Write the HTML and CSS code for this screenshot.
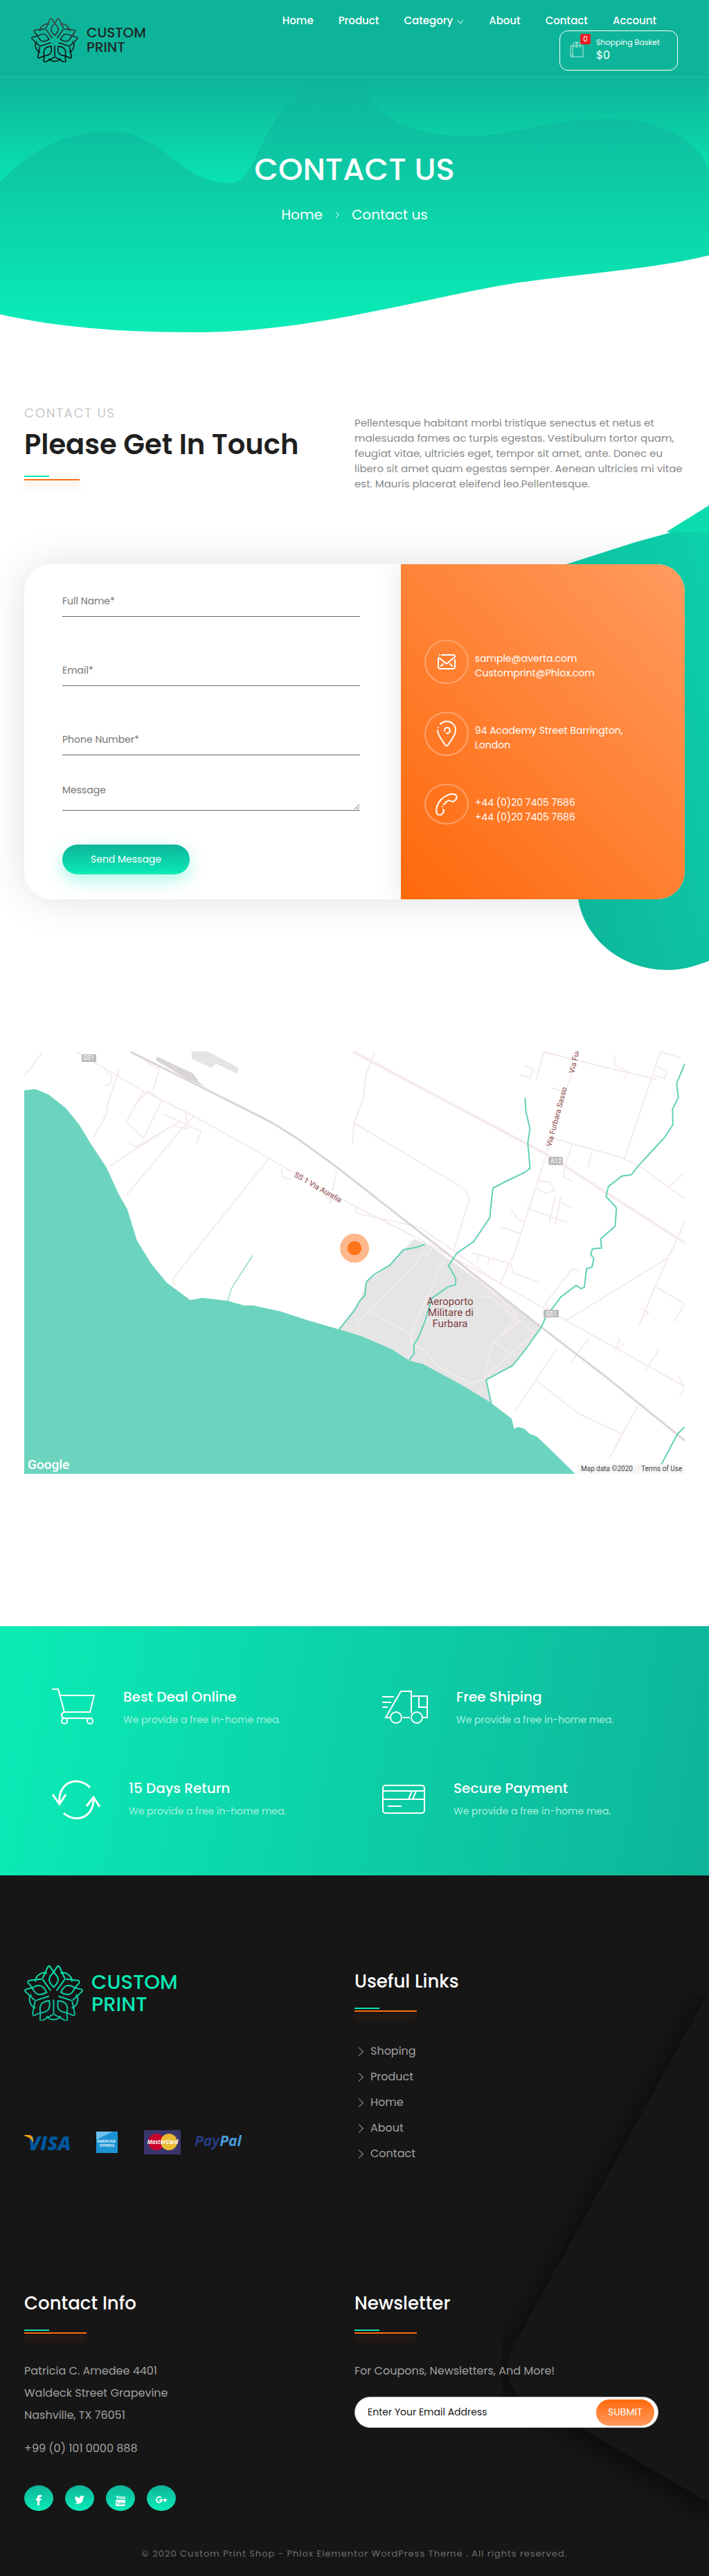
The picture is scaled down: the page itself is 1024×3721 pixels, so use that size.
FILE: index.html
```html
<!DOCTYPE html>
<html lang="en">

<head>
    <meta charset="UTF-8">
    <meta name="viewport" content="width=device-width, initial-scale=1.0">
    <title>Contact us - Custom Print</title>
    <link rel="stylesheet" href="styles.css">
</head>

<body>

    <!-- Shared logo shapes -->
    <svg class="defs" width="0" height="0" aria-hidden="true">
        <defs>
            <g id="petal" fill="none" stroke="#fff" stroke-width="6" stroke-linecap="round" stroke-linejoin="round">
                <path d="M0 -33C-27 -58 -25 -76 0 -98L14 -121Q20 -130 26 -121L48 -73" />
                <path d="M0 -33C27 -58 25 -76 0 -98L-14 -121Q-20 -130 -26 -121L-48 -73" />
                <path transform="rotate(36)" d="M0 -24V-82M-30 -95Q-20 -109 0 -109T30 -95" />
            </g>
            <g id="flower">
                <use href="#petal" />
                <use href="#petal" transform="rotate(72)" />
                <use href="#petal" transform="rotate(144)" />
                <use href="#petal" transform="rotate(216)" />
                <use href="#petal" transform="rotate(288)" />
            </g>
            <mask id="flowerMask" maskUnits="userSpaceOnUse" x="-130" y="-130" width="260" height="260">
                <use href="#flower" />
            </mask>
            <linearGradient id="logoDark" x1="0" y1="0" x2="0" y2="1">
                <stop offset="0" stop-color="#3f4b49" />
                <stop offset="1" stop-color="#000" />
            </linearGradient>
            <linearGradient id="logoGreen" x1="0" y1="0" x2="0" y2="1">
                <stop offset="0" stop-color="#0aecb6" />
                <stop offset="1" stop-color="#0eb499" />
            </linearGradient>
        </defs>
    </svg>

    <header class="header">
        <a class="logo" href="#">
            <svg class="logo-mark" viewBox="-129 -128 258 242" aria-hidden="true">
                <rect x="-130" y="-130" width="260" height="245" fill="url(#logoDark)" mask="url(#flowerMask)" />
            </svg>
            <span>CUSTOM<br>PRINT</span>
        </a>
        <div class="header-right">
            <nav class="nav">
                <a href="#">Home</a>
                <a href="#">Product</a>
                <a href="#">Category
                    <svg width="10" height="7" viewBox="0 0 10 7" aria-hidden="true"><path d="M1 1L5 6L9 1" /></svg>
                </a>
                <a href="#">About</a>
                <a href="#">Contact</a>
                <a href="#">Account</a>
            </nav>
            <a class="basket" href="#">
                <span class="basket-icon">
                    <svg width="20" height="23" viewBox="0 0 20 23" aria-hidden="true">
                        <path d="M1 6H19V22H1ZM4 6V22M1 19H4L5 22M5 9V4Q5 1 8 1T11 4V9M9 9V4Q9 1 12 1T15 4V9" />
                    </svg>
                    <span class="badge">0</span>
                </span>
                <span class="basket-text">Shopping Basket<b>$0</b></span>
            </a>
        </div>
    </header>

    <section class="hero">
        <svg class="hero-bg" viewBox="0 0 1024 367" preserveAspectRatio="none" aria-hidden="true">
            <defs>
                <linearGradient id="heroBack" gradientUnits="userSpaceOnUse" x1="0" y1="0" x2="0" y2="155">
                    <stop offset="0" stop-color="#0eb499" />
                    <stop offset="1" stop-color="#09e4b2" />
                </linearGradient>
                <linearGradient id="heroFront" gradientUnits="userSpaceOnUse" x1="0" y1="0" x2="0" y2="355">
                    <stop offset="0" stop-color="#0eb499" />
                    <stop offset="1" stop-color="#0aebb6" />
                </linearGradient>
            </defs>
            <rect width="1024" height="180" fill="url(#heroBack)" />
            <path fill="url(#heroFront)" d="M0 150C50 100 100 77 157 77C215 77 245 118 280 138C300 148 315 152 333 152C352 152 362 130 378 97C398 55 420 25 468 0H525C530 45 575 84 673 84C750 84 790 59 878 59C960 59 1018 95 1024 140V256C950 275 860 280 745 296C600 320 450 367 280 367C160 367 70 357 0 341Z" />
        </svg>
        <h1>CONTACT US</h1>
        <p class="breadcrumb">
            <a href="#">Home</a>
            <svg width="6" height="11" viewBox="0 0 6 11" aria-hidden="true"><path d="M1 1L5 5L1 10" /></svg>
            <span>Contact us</span>
        </p>
    </section>

    <main>
        <section class="intro">
            <div>
                <p class="subtitle">CONTACT US</p>
                <h2>Please Get In Touch</h2>
                <div class="bars"></div>
            </div>
            <p class="intro-text">Pellentesque habitant morbi tristique senectus et netus et malesuada fames ac turpis egestas. Vestibulum tortor quam, feugiat vitae, ultricies eget, tempor sit amet, ante. Donec eu libero sit amet quam egestas semper. Aenean ultricies mi vitae est. Mauris placerat eleifend leo.Pellentesque.</p>
        </section>

        <section class="contact">
            <svg class="blob" width="209" height="672" viewBox="0 0 209 672" aria-hidden="true">
                <defs>
                    <linearGradient id="blobFill" x1="0" y1="1" x2="1" y2="0">
                        <stop offset="0" stop-color="#0eb499" />
                        <stop offset="1" stop-color="#0cd0aa" />
                    </linearGradient>
                </defs>
                <path fill="#0bdcae" d="M209 0L148 38L209 60Z" />
                <path fill="url(#blobFill)" d="M0 86L100 54Q135 44 155 39H209V658C185 667 170 671 148 671C80 671 24 622 19 560V86Z" />
            </svg>

            <div class="card">
                <form class="contact-form">
                    <input type="text" placeholder="Full Name*" aria-label="Full Name">
                    <input type="email" placeholder="Email*" aria-label="Email">
                    <input type="tel" placeholder="Phone Number*" aria-label="Phone Number">
                    <textarea placeholder="Message" aria-label="Message"></textarea>
                    <button type="submit">Send Message</button>
                </form>

                <div class="contact-info">
                    <div class="info-item">
                        <span class="circle">
                            <svg width="26" height="22" viewBox="0 0 26 22" aria-hidden="true">
                                <path d="M6 1H23Q25 1 25 4L14 13Q13 14 12 13L2 5Q1 5 1 7V18Q1 21 4 21H22Q25 21 25 18V8M5 17L8 14M21 17L18 14M3 1V1" />
                            </svg>
                        </span>
                        <p>sample@averta.com<br>Customprint@Phlox.com</p>
                    </div>
                    <div class="info-item">
                        <span class="circle">
                            <svg width="28" height="38" viewBox="0 0 28 38" aria-hidden="true">
                                <path d="M5 5Q9 1 14 1C22 1 27 7 27 14C27 21 20 29 16 35Q14 38 12 35C8 29 1 21 1 14M2 10V10M11 15A4 4 0 1 1 14 18" />
                            </svg>
                        </span>
                        <p>94 Academy Street Barrington,<br>London</p>
                    </div>
                    <div class="info-item">
                        <span class="circle circle-flat">
                            <svg width="32" height="32" viewBox="0 0 32 32" aria-hidden="true">
                                <path d="M12 16L16 12Q19 9 22 11Q25 13 27 11L30 8Q32 5 29 2C23 -1 14 3 8 9C2 16 0 23 2 29Q5 33 8 31L11 28Q13 26 11 23M10 19V19" />
                            </svg>
                        </span>
                        <p>+44 (0)20 7405 7686<br>+44 (0)20 7405 7686</p>
                    </div>
                </div>
            </div>
        </section>

        <section class="map">
            <svg class="map-lines" viewBox="54 47 1460 1494" preserveAspectRatio="none" aria-hidden="true">
                <!-- airport -->
                <path class="land" d="M915 710L956 738L1197 1020L1160 1105L1133 1158L1075 1208L1086 1290L905 1140L750 1030L795 930L810 862L862 803Z" />
                <path class="land" d="M424 47H460L528 105L524 125L478 90L468 105L424 72Z" />
                <!-- sea -->
                <path class="sea" d="M54 184L78 179L107 198L146 247L175 304L200 370L235 455L264 555L282 605L303 715L334 796L368 863L421 926L448 918L504 929L540 945L560 945L620 966L680 997L750 1030L800 1054L867 1100L905 1140L935 1152L985 1195L1030 1235L1086 1290L1131 1345L1137 1381L1146 1375L1160 1382L1171 1399L1188 1410L1230 1475L1272 1541H54Z" />
                <!-- roads -->
                <g class="road">
                    <path d="M168 47L310 180L420 268L530 365L650 475L780 590L860 655L956 735L1100 862L1250 997L1400 1130L1514 1232" />
                    <path d="M95 47L54 135M264 113L240 220L235 270L208 348M318 185L279 297L318 353L358 220L330 188L305 220M232 103L235 120L248 135L245 160L232 170M320 80L352 108L340 180" />
                    <path d="M362 267L445 330L435 370M410 260L415 320L382 310L300 385L286 370M430 275L400 325L280 555M400 290L243 452M593 428L390 835Q378 855 388 875M622 460L625 490L645 500" />
                    <path d="M829 47L809 130L804 210L783 300L780 370M783 300L1025 530Q1040 550 1036 580L1003 752M745 470L735 540M720 560L735 575L727 585" />
                    <path d="M785 600L790 620L850 640L930 670L1003 752L1100 862M1203 47L1346 107M1203 47L1186 145M1160 97L1180 110L1172 140L1150 130M1195 47L1450 145M1460 47L1440 145L1380 430M1360 60L1358 92L1390 120L1380 143" />
                    <path d="M1450 100L1475 115L1470 140L1448 132M1460 47L1505 70M1270 100L1250 190L1220 175M1220 350L1140 750L1105 870M1215 350L1370 420L1412 450L1514 568M1265 375L1250 450L1245 490L1268 507M1310 395L1300 455" />
                    <path d="M1190 505L1215 510L1226 540L1205 548L1185 530M1165 600L1255 653M1228 555L1215 655M1240 560L1228 658M1130 605L1145 640L1158 650M1108 668L1150 690M1240 580L1265 600" />
                    <path d="M1042 758L1130 798L1135 830L1190 862M1060 770L1055 792M1082 778L1078 805M1250 1000L1478 775L1514 650M1478 775L1448 878L1412 1020M1448 878L1514 938L1490 1005M1418 955L1434 970L1425 985" />
                    <path d="M1265 815L1205 940L1215 960M1265 815L1282 825M1510 480L1480 525M1370 1060L1362 1100L1380 1080M1458 1100L1425 1180M1232 1095L1140 1315M1303 1060L1260 1150M1185 1210L1280 1328L1376 1400L1410 1300M1376 1400L1348 1485M1500 1195L1514 1240L1502 1265" />
                    <path d="M956 740L948 765L935 758L915 808L818 965L788 1012M818 965L908 1048L912 1085L935 1098L972 1165L1042 1220L1072 1205L1085 1090L1140 990L1178 1038L1172 1060L1130 1115L1085 1180L1072 1205M980 790L908 1048M960 745L1070 870L1145 980M1095 1075L1125 1115M1150 1000L1100 1060M1065 915H1085L1140 990" />
                </g>
                <path class="highway" d="M780 47L1210 412L1514 724" />
                <path class="rail" d="M288 47L530 240L600 297L655 352L740 450L840 575L960 725L1197 1022L1340 1198L1514 1423" />
                <path class="rail-yard" d="M348 65L428 125L440 155L455 172L415 145L345 78Z" />
                <!-- rivers -->
                <g class="river">
                    <path d="M1161 210L1163 260L1172 320L1167 370L1172 460L1160 475L1120 505L1090 530L1085 600L1083 635L1047 720L1010 760L992 805L1008 850L1007 872L990 880L955 920L940 1000L925 1060L915 1085L916 1115L905 1138" />
                    <path d="M1514 90L1496 160L1500 210L1487 250L1488 305L1470 350L1435 410L1412 450L1396 483L1375 487L1345 525L1340 560L1363 600L1360 665L1328 710L1330 742L1310 745L1306 765L1313 778L1309 810L1297 815L1292 880L1285 886L1274 874L1240 915L1220 958L1207 985L1197 1022L1160 1105L1133 1158L1075 1208L1086 1290" />
                    <path d="M940 728Q925 740 892 748L862 803L828 835L810 862L807 910L795 930L785 960L750 1030M1514 1375L1498 1400L1462 1508L1455 1541" />
                    <path class="stream" d="M559 768L512 885L504 929" />
                </g>
            </svg>
            <svg class="map-labels" viewBox="0 0 954 610" role="img" aria-label="Map of the Furbara area">
                <rect class="shield" x="83" y="4" width="21" height="11" />
                <text class="shield-text" x="93" y="12">SS1</text>
                <rect class="shield" x="757" y="152" width="21" height="12" rx="3" />
                <text class="shield-text" x="768" y="161">A12</text>
                <rect class="shield" x="750" y="373" width="22" height="11" />
                <text class="shield-text" x="761" y="382">SS1</text>
                <text class="street" transform="translate(389 180) rotate(30)">SS 1 Via Aurelia</text>
                <text class="street" transform="translate(761 138) rotate(-75)">Via Furbara Sasso</text>
                <text class="street" transform="translate(794 32) rotate(-77)">Via Furbara</text>
                <g class="place">
                    <text x="615" y="366">Aeroporto</text>
                    <text x="616" y="382">Militare di</text>
                    <text x="615" y="398">Furbara</text>
                </g>
                <text class="google" x="5" y="603">Google</text>
                <rect x="799" y="596" width="155" height="14" fill="#f7f6f6" />
                <text class="terms" x="804" y="606">Map data ©2020</text>
                <text class="terms" x="891" y="606">Terms of Use</text>
            </svg>
            <span class="marker"></span>
        </section>
    </main>

    <section class="features">
        <div class="feature">
            <svg width="62" height="52" viewBox="0 0 62 52" aria-hidden="true">
                <path d="M0 1H9L18 34H55L61 10H12M18 34Q13 36 14 39Q14 42 18 43H58" />
                <circle cx="18" cy="47" r="4" /><circle cx="55" cy="47" r="4" />
            </svg>
            <div>
                <h3>Best Deal Online</h3>
                <p>We provide a free in-home mea.</p>
            </div>
        </div>
        <div class="feature">
            <svg width="66" height="52" viewBox="0 0 66 52" aria-hidden="true">
                <path d="M11 42H5L27 4H42V36M42 11H65V42H59M53 11V27H65M30 42H40M0 12H17M0 20H13M0 27H8" />
                <circle cx="20" cy="42" r="8" /><circle cx="50" cy="42" r="8" />
            </svg>
            <div>
                <h3>Free Shiping</h3>
                <p>We provide a free in-home mea.</p>
            </div>
        </div>
        <div class="feature">
            <svg class="thick" width="70" height="58" viewBox="0 0 70 58" aria-hidden="true">
                <path d="M55 11C37 -7 8 3 11 34M1 21L11 35L20 21M17 48C35 64 62 54 60 25M50 38L60 25L69 39" />
            </svg>
            <div>
                <h3>15 Days Return</h3>
                <p>We provide a free in-home mea.</p>
            </div>
        </div>
        <div class="feature">
            <svg width="62" height="54" viewBox="0 0 62 54" aria-hidden="true">
                <rect x="1" y="8" width="60" height="40" rx="4" />
                <path d="M1 16H61M1 28H61M8 38H28M43 16L38 28M49 16L44 28" />
            </svg>
            <div>
                <h3>Secure Payment</h3>
                <p>We provide a free in-home mea.</p>
            </div>
        </div>
    </section>

    <footer class="footer">
        <svg class="footer-bg" width="300" height="842" viewBox="0 0 300 842" aria-hidden="true">
            <path d="M320 -40L128 310L16 512Q-4 550 26 582L111 626L320 748Z" />
        </svg>

        <div class="footer-grid">
            <div>
                <a class="logo logo-footer" href="#">
                    <svg class="logo-mark" viewBox="-129 -128 258 242" aria-hidden="true">
                        <rect x="-130" y="-130" width="260" height="245" fill="url(#logoGreen)" mask="url(#flowerMask)" />
                    </svg>
                    <span>CUSTOM<br>PRINT</span>
                </a>
                <svg class="payments" width="314" height="36" viewBox="0 0 314 36" role="img" aria-label="Accepted payments">
                    <text class="visa" x="6" y="29">VISA</text>
                    <path fill="#f7a01b" d="M0 7H8Q13 8 13 18Q9 10 0 8Z" />
                    <rect x="104" y="2" width="31" height="31" fill="#1b93d3" />
                    <path fill="#6cc0ea" d="M104 2H128L104 14Z" />
                    <text class="amex" x="105" y="18">AMERICAN</text>
                    <text class="amex" x="109" y="24">EXPRESS</text>
                    <rect x="173" width="53" height="35" fill="#39366b" />
                    <circle cx="191" cy="17" r="12" fill="#c8032c" />
                    <circle cx="209" cy="17" r="12" fill="#e8b933" />
                    <text class="mastercard" x="200" y="20">MasterCard</text>
                    <text class="paypal" x="246" y="23">Pay<tspan>Pal</tspan></text>
                </svg>
            </div>

            <div>
                <h4>Useful Links</h4>
                <div class="bars bars-footer"></div>
                <ul class="links">
                    <li><a href="#">Shoping</a></li>
                    <li><a href="#">Product</a></li>
                    <li><a href="#">Home</a></li>
                    <li><a href="#">About</a></li>
                    <li><a href="#">Contact</a></li>
                </ul>
            </div>

            <div>
                <h4>Contact Info</h4>
                <div class="bars bars-footer"></div>
                <address>
                    <p>Patricia C. Amedee 4401<br>Waldeck Street Grapevine<br>Nashville, TX 76051</p>
                    <p>+99 (0) 101 0000 888</p>
                </address>
                <div class="social">
                    <a href="#" aria-label="Facebook">
                        <svg width="16" height="16" viewBox="0 0 16 16"><path d="M6 16V9H4V6H6V4Q6 1 9 1H12V4H10Q9 4 9 5V6H12L11 9H9V16Z" /></svg>
                    </a>
                    <a href="#" aria-label="Twitter">
                        <svg width="16" height="16" viewBox="0 0 16 16"><path d="M15 4L13 5Q13 12 8 13Q4 15 1 13Q4 13 5 12Q3 11 2 9H4Q1 8 1 5L3 6Q1 4 2 2Q4 5 8 5Q8 2 11 2Q12 2 13 3L15 2L14 4Z" /></svg>
                    </a>
                    <a href="#" aria-label="YouTube">
                        <svg width="16" height="18" viewBox="0 0 16 18"><text class="you" x="8" y="8">You</text><rect x="1" y="9" width="14" height="9" rx="2" /><text class="tube" x="8" y="16">Tube</text></svg>
                    </a>
                    <a href="#" aria-label="Google Plus">
                        <svg width="18" height="12" viewBox="0 0 18 12"><path class="gplus" d="M9 3A4 4 0 1 0 10 6H6M12 6H17M14 4V9" /></svg>
                    </a>
                </div>
            </div>

            <div>
                <h4>Newsletter</h4>
                <div class="bars bars-footer"></div>
                <form class="newsletter">
                    <label for="news">For Coupons, Newsletters, And More!</label>
                    <div class="newsletter-box">
                        <input id="news" type="email" placeholder="Enter Your Email Address">
                        <button type="submit">SUBMIT</button>
                    </div>
                </form>
            </div>
        </div>

        <p class="copyright">© 2020 Custom Print Shop - Phlox Elementor WordPress Theme . All rights reserved.</p>
    </footer>

</body>

</html>
```
FILE: styles.css
```css
* {
    box-sizing: border-box;
}

body {
    margin: 0;
    font-family: Poppins, Inter, Arial, sans-serif;
    font-size: 14px;
    color: #888;
    background: #fff;
    overflow-x: hidden;
}

h1, h2, h3, h4, p, ul {
    margin: 0;
    padding: 0;
}

a {
    color: inherit;
    text-decoration: none;
}

input, textarea, button {
    font-family: inherit;
    font-size: 14px;
}

.defs {
    position: absolute;
}

/* Header */

.header {
    display: flex;
    justify-content: space-between;
    align-items: flex-start;
    padding: 20px 45px 9px;
    background: #0eb499;
    border-bottom: 1px solid #34bfa8;
}

.logo {
    display: flex;
    align-items: center;
    gap: 12px;
    margin-top: 6px;
    color: #1d2726;
    font-size: 20px;
    line-height: 21px;
    font-weight: 500;
}

.logo-mark {
    width: 68px;
    height: 64px;
}

.header-right {
    display: flex;
    flex-direction: column;
    align-items: flex-end;
    gap: 4px;
}

.nav {
    display: flex;
    gap: 36px;
    padding-right: 31px;
    color: #fff;
    font-size: 15px;
    font-weight: 500;
    line-height: 20px;
}

.nav svg {
    margin-left: 2px;
}

.nav path, .breadcrumb path {
    fill: none;
    stroke: #fff;
}

.basket {
    display: flex;
    gap: 18px;
    width: 171px;
    height: 58px;
    padding: 7px 14px;
    border: 1px solid #fff;
    border-radius: 12px;
    color: #fff;
}

.basket-icon {
    position: relative;
    padding-top: 8px;
}

.basket-icon path {
    fill: none;
    stroke: #b5e8df;
}

.badge {
    position: absolute;
    top: -3px;
    right: -10px;
    width: 15px;
    height: 15px;
    border-radius: 3px;
    background: #ed1c24;
    font-size: 10px;
    line-height: 15px;
    text-align: center;
}

.basket-text {
    font-size: 11px;
    line-height: 18px;
    white-space: nowrap;
}

.basket-text b {
    display: block;
    font-size: 16px;
    line-height: 20px;
    font-weight: 400;
}

/* Hero */

.hero {
    position: relative;
    padding: 103px 0 155px;
    text-align: center;
    color: #fff;
}

.hero-bg {
    position: absolute;
    inset: 0;
    width: 100%;
    height: 100%;
}

.hero h1 {
    position: relative;
    font-size: 45px;
    line-height: 60px;
    font-weight: 500;
}

.breadcrumb {
    position: relative;
    display: flex;
    justify-content: center;
    align-items: center;
    gap: 18px;
    margin-top: 20px;
    font-size: 20px;
    line-height: 30px;
}

/* Intro */

.intro {
    display: grid;
    grid-template-columns: 1fr 1fr;
    padding: 105px 35px;
}

.subtitle {
    font-size: 18px;
    line-height: 24px;
    font-weight: 300;
    letter-spacing: 2px;
    color: #bbb;
}

.intro h2 {
    margin-top: 8px;
    font-size: 40px;
    line-height: 50px;
    font-weight: 600;
    color: #1f1f1f;
}

.bars {
    width: 80px;
    height: 7px;
    margin-top: 20px;
    background: linear-gradient(#0ae4b2, #0ae4b2) 0 0 / 36px 2px no-repeat;
    border-bottom: 2px solid #ff6c0e;
    box-shadow: 0 10px 10px rgba(255, 108, 14, 0.12);
}

.intro-text {
    margin-top: 15px;
    font-size: 15px;
    line-height: 22px;
}

/* Contact card */

.contact {
    position: relative;
    padding: 0 35px;
}

.blob {
    position: absolute;
    top: -85px;
    right: 0;
}

.card {
    position: relative;
    display: grid;
    grid-template-columns: 57% 43%;
    border-radius: 40px;
    overflow: hidden;
    background: #fff;
}

.contact::before {
    content: "";
    position: absolute;
    inset: 0 35px;
    border-radius: 40px;
    box-shadow: 0 0 60px rgba(0, 0, 0, 0.12);
}

.contact-form {
    display: flex;
    flex-direction: column;
    align-items: flex-start;
    padding: 31px 59px 36px 55px;
}

.contact-form input, .contact-form textarea {
    width: 100%;
    height: 45px;
    margin-bottom: 55px;
    padding: 0;
    border: 0;
    border-bottom: 1px solid #666;
    border-radius: 0;
    background: none;
}

.contact-form input:last-of-type {
    margin-bottom: 36px;
}

.contact-form textarea {
    height: 44px;
    margin-bottom: 49px;
    padding: 4px 0;
    line-height: 20px;
}

.contact-form button {
    width: 184px;
    height: 43px;
    border: 0;
    border-radius: 22px;
    color: #fff;
    background: linear-gradient(#0eb499, #0aebb6);
    box-shadow: 0 8px 24px rgba(10, 235, 182, 0.35);
}

.contact-info {
    display: flex;
    flex-direction: column;
    gap: 40px;
    padding: 109px 34px 0;
    color: #fff;
    background: linear-gradient(45deg, #ff690b, #ff9b5f);
    box-shadow: 0 0 40px rgba(0, 0, 0, 0.1);
}

.info-item {
    display: flex;
    gap: 9px;
}

.info-item p {
    margin-top: 17px;
    line-height: 21px;
}

.circle {
    display: flex;
    flex: none;
    justify-content: center;
    align-items: center;
    width: 64px;
    height: 64px;
    border: 2px solid #ffa36d;
    border-radius: 50%;
}

.circle-flat {
    height: 59px;
}

.circle path {
    fill: none;
    stroke: #fff;
    stroke-width: 2;
    stroke-linecap: round;
}

/* Map */

.map {
    position: relative;
    margin: 220px 35px;
    overflow: hidden;
}

.map-lines {
    position: absolute;
    inset: 0;
    width: 100%;
    height: 100%;
}

.map-lines path {
    vector-effect: non-scaling-stroke;
}

.map-labels {
    position: relative;
    display: block;
    width: 100%;
    font-family: Roboto, Arial, sans-serif;
}

.map-lines .land {
    fill: #e5e5e5;
}

.map-lines .sea {
    fill: #6cd4be;
}

.road path, .highway {
    fill: none;
    stroke: #f5ebeb;
    stroke-width: 2;
}

.map-lines .highway {
    stroke-width: 4;
}

.map-lines .rail {
    fill: none;
    stroke: #dad5d5;
    stroke-width: 3;
}

.map-lines .rail-yard {
    fill: #dad5d5;
}

.river path {
    fill: none;
    stroke: #62d0b8;
    stroke-width: 2;
}

.river .stream {
    stroke-width: 1;
}

.shield {
    fill: #bcbcbc;
}

.shield-text {
    font-size: 9px;
    fill: #fff;
    text-anchor: middle;
}

.street {
    font-size: 11px;
    fill: #874747;
}

.place text {
    font-size: 15px;
    fill: #803d3f;
    text-anchor: middle;
}

.google {
    font-size: 19px;
    font-weight: 500;
    fill: #fff;
}

.terms {
    font-size: 10px;
    fill: #444;
}

.marker {
    position: absolute;
    top: 263px;
    left: 50%;
    width: 42px;
    height: 42px;
    margin-left: -21px;
    border-radius: 50%;
    background: radial-gradient(closest-side, #ff7519 0 46%, #ffb78c 50%);
}

/* Features */

.features {
    display: grid;
    grid-template-columns: 1fr 1fr;
    row-gap: 77px;
    padding: 90px 35px 83px;
    background: linear-gradient(100deg, #0aecb6, #0eb499);
}

.feature {
    display: flex;
    gap: 41px;
    height: 55px;
    padding-left: 40px;
    color: #fff;
}

.feature path, .feature circle, .feature rect {
    fill: none;
    stroke: #fff;
    stroke-width: 2;
}

.thick path {
    stroke-width: 3;
}

.feature h3 {
    font-size: 20px;
    line-height: 24px;
    font-weight: 500;
}

.feature p {
    margin-top: 11px;
    line-height: 20px;
    color: #a8f0df;
}

/* Footer */

.footer {
    position: relative;
    padding: 130px 35px 22px;
    color: #a0a0a0;
    font-size: 16px;
    background: #161616;
}

.footer-bg {
    position: absolute;
    top: 170px;
    right: 0;
    overflow: hidden;
}

.footer-bg path {
    fill: #161616;
    filter: drop-shadow(-6px 8px 18px rgba(0, 0, 0, 0.6));
}

.footer-grid {
    position: relative;
    display: grid;
    grid-template-columns: 1fr 1fr;
    row-gap: 175px;
}

.logo-footer {
    margin: 0;
    color: #0ae9b5;
    font-size: 29px;
    line-height: 32px;
}

.logo-footer .logo-mark {
    width: 85px;
    height: 80px;
}

.payments {
    display: block;
    margin-top: 158px;
    font-family: "Open Sans", Arial, sans-serif;
    font-weight: 700;
    font-style: italic;
}

.visa {
    font-size: 28px;
    font-weight: 800;
    fill: #00579f;
}

.amex {
    font-size: 5px;
    font-style: normal;
    fill: #e4f3fb;
}

.mastercard {
    font-size: 8px;
    fill: #fff;
    text-anchor: middle;
}

.paypal {
    font-size: 21px;
    fill: #253b80;
}

.paypal tspan {
    fill: #4a9bd8;
}

.footer h4 {
    padding-top: 5px;
    font-size: 26px;
    line-height: 36px;
    font-weight: 500;
    color: #fff;
}

.bars-footer {
    width: 90px;
    height: 6px;
}

.links {
    margin-top: 38px;
    list-style: none;
    line-height: 37px;
}

.links a {
    display: flex;
    align-items: center;
}

.links a::before {
    content: "";
    width: 8px;
    height: 8px;
    margin: 2px 12px 0 2px;
    border: solid #a0a0a0;
    border-width: 1px 1px 0 0;
    transform: rotate(45deg);
}

address {
    margin-top: 38px;
    font-style: normal;
    line-height: 32px;
}

address p + p {
    margin-top: 16px;
}

.social {
    display: flex;
    gap: 17px;
    margin-top: 37px;
}

.social a {
    display: flex;
    justify-content: center;
    align-items: center;
    width: 42px;
    height: 37px;
    padding-top: 4px;
    border-radius: 50%;
    background: linear-gradient(#0eb499, #0aebb6);
}

.social svg {
    fill: #fff;
}

.social text {
    font-family: Roboto, Arial, sans-serif;
    font-size: 8px;
    font-weight: 700;
    text-anchor: middle;
}

.social .tube {
    font-size: 6px;
    fill: #0dcba5;
}

.social .gplus {
    fill: none;
    stroke: #fff;
    stroke-width: 2;
}

.newsletter {
    margin-top: 38px;
}

.newsletter label {
    display: block;
    line-height: 32px;
}

.newsletter-box {
    display: flex;
    align-items: center;
    width: 92%;
    height: 45px;
    margin-top: 21px;
    padding: 0 5px 0 18px;
    border: 1px solid #bbb;
    border-radius: 23px;
    background: #fff;
}

.newsletter input {
    flex: 1;
    min-width: 0;
    padding: 0;
    border: 0;
    background: none;
}

.newsletter input::placeholder {
    color: #161616;
}

.newsletter button {
    width: 84px;
    height: 38px;
    padding: 0;
    border: 0;
    border-radius: 19px;
    color: #fff;
    background: linear-gradient(#ff6a0c, #ff9a5e);
}

.copyright {
    position: relative;
    margin-top: 52px;
    font-size: 13px;
    line-height: 20px;
    letter-spacing: 1px;
    text-align: center;
    color: #6f6f6f;
}
```
